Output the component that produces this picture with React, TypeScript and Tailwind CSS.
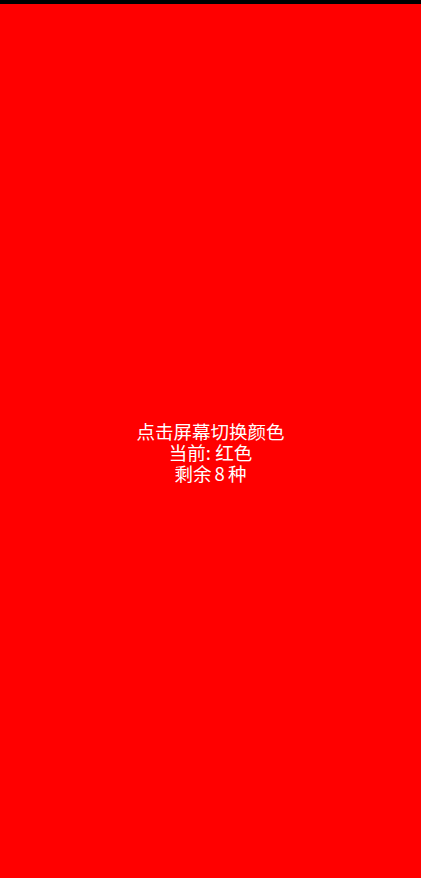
export default function App() {
  return (
    <div className="flex h-[878px] w-full flex-col bg-black">
      <div className="h-[4px] shrink-0 bg-black" />
      <main className="flex flex-1 cursor-pointer flex-col items-center justify-center bg-[#ff0000] pt-[22px]">
        <div
          className="text-center text-[18.5px] leading-[21px] text-white"
          style={{ fontFamily: '"Noto Sans CJK SC", "Noto Sans", sans-serif' }}
        >
          <p>点击屏幕切换颜色</p>
          <p>当前: 红色</p>
          <p>
            剩余<span className="px-[3px]">8</span>种
          </p>
        </div>
      </main>
    </div>
  );
}
